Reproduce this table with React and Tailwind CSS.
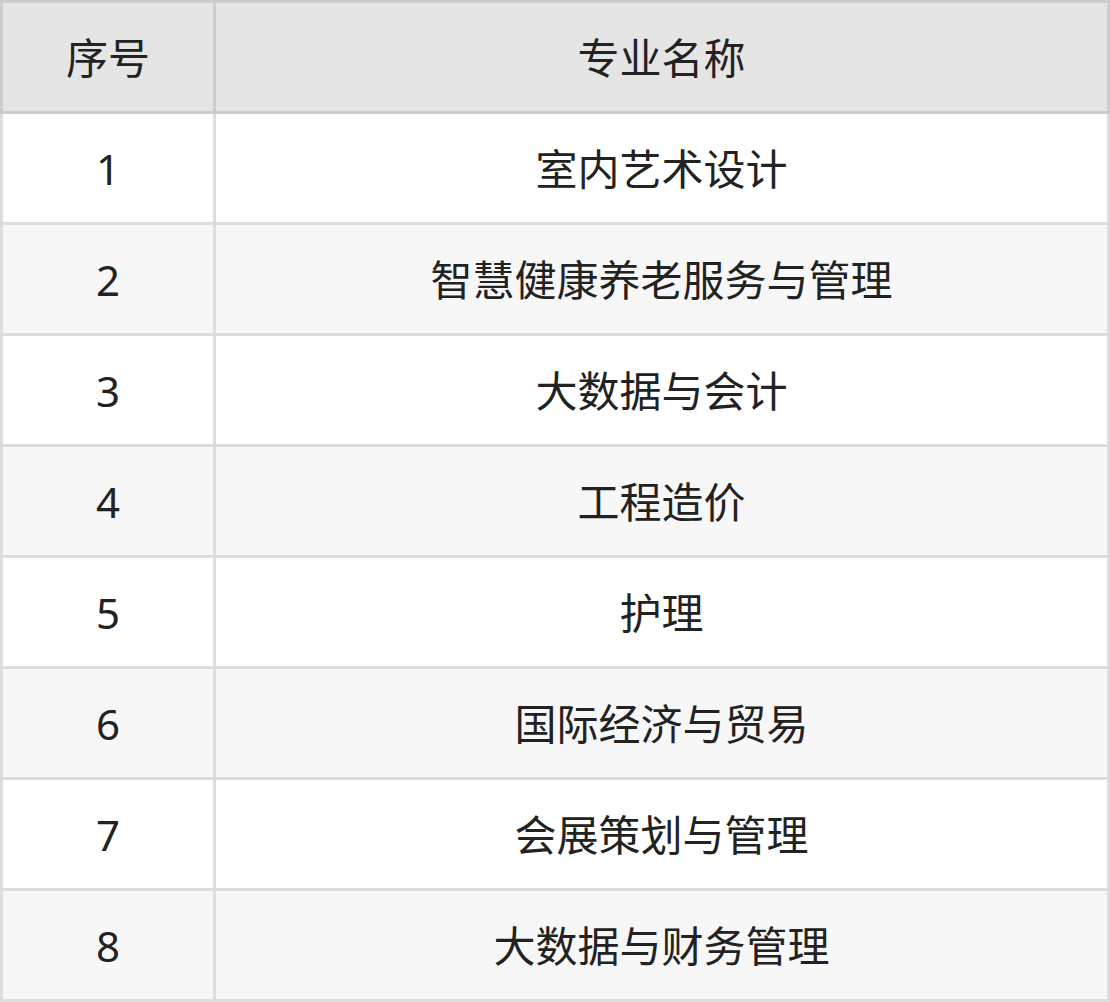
import React from "react";

// Majors listed in the table
const MAJORS = [
  "室内艺术设计",
  "智慧健康养老服务与管理",
  "大数据与会计",
  "工程造价",
  "护理",
  "国际经济与贸易",
  "会展策划与管理",
  "大数据与财务管理",
];

const App = () => {
  return (
    <div
      className="w-[1110px] text-[42px] text-[#222222]"
      style={{ fontFamily: '"Noto Sans", "Noto Sans CJK SC", sans-serif' }}
    >
      <div className="flex h-[114px] bg-[#e5e5e5] border-[3px] border-[#cccccc]">
        <div className="w-[213px] flex items-center justify-center border-r-[3px] border-[#cccccc]">
          序号
        </div>
        <div className="flex-1 flex items-center justify-center">专业名称</div>
      </div>
      {MAJORS.map((name, index) => (
        <div
          key={name}
          className={
            "flex h-[111px] border-x-[3px] border-b-[3px] border-[#dddddd] " +
            (index % 2 === 0 ? "bg-white" : "bg-[#f7f7f7]")
          }
        >
          <div className="w-[213px] flex items-center justify-center border-r-[3px] border-[#dddddd]">
            {index + 1}
          </div>
          <div className="flex-1 flex items-center justify-center">{name}</div>
        </div>
      ))}
    </div>
  );
};

export default App;
